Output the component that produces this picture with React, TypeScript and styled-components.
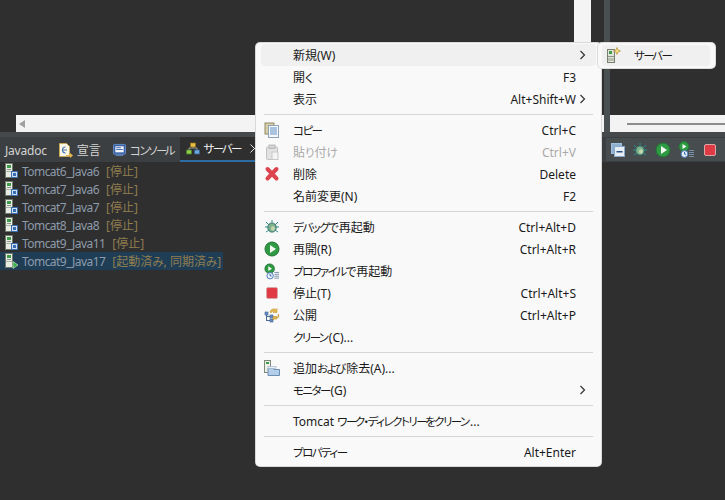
import React from "react";
import styled, { createGlobalStyle } from "styled-components";

const Global = createGlobalStyle`
  html, body { margin: 0; padding: 0; background: #2f2f2f; }
  body { font-family: "Noto Sans", "Noto Sans CJK JP", sans-serif; font-size: 12px; font-feature-settings: "palt"; }
`;

const Page = styled.div`
  position: relative; width: 725px; height: 500px; overflow: hidden; background: #2f2f2f;
  display: flex; flex-direction: column;
`;
const Top = styled.div`display: flex; height: 132px; flex: none;`;
const EditorPane = styled.div`width: 604px; display: flex; flex-direction: column; flex: none;`;
const EditorBody = styled.div`flex: 1; display: flex; justify-content: flex-end; padding-right: 13px;`;
const VScroll = styled.div`width: 17px; background: #f4f4f4;`;
const HScroll = styled.div<{ $inset?: number }>`
  height: 17px; background: #f3f3f3; margin-left: ${p => p.$inset ?? 0}px;
  display: flex; align-items: center;
`;
const ArrowLeft = styled.div`
  width: 0; height: 0; margin-left: 3px;
  border-top: 4px solid transparent; border-bottom: 4px solid transparent; border-right: 6px solid #a0a0a0;
`;
const Sash = styled.div`width: 6px; background: #4a4f52; flex: none;`;
const RightPane = styled.div`flex: 1; display: flex; flex-direction: column; justify-content: flex-end;`;
const Thumb = styled.div`flex: 1; height: 2px; margin-left: 17px; background: #8c8c8c;`;

const TabBand = styled.div`
  height: 30px; flex: none; box-sizing: border-box; display: flex; align-items: stretch;
  background: #3c3f42; border-top: 5px solid #45494c;
`;
const Tab = styled.div<{ $active?: boolean; $ml?: number; $tracking?: number }>`
  flex: none; display: flex; align-items: center; gap: 4px; height: 25px; box-sizing: border-box;
  margin-left: ${p => p.$ml ?? 0}px;
  padding: ${p => (p.$active ? "0 0 0 6px" : "1px 0 0")};
  color: ${p => (p.$active ? "#f2f2f2" : "#d4d4d4")};
  background: ${p => (p.$active ? "#2f2f2f" : "transparent")};
  border-bottom: ${p => (p.$active ? "2px solid #2e6da4" : "0")};
  width: ${p => (p.$active ? "76px" : "auto")};
  letter-spacing: ${p => p.$tracking ?? 0}px;
  white-space: nowrap;
  svg { flex: none; }
`;
const CloseIcon = styled.svg`margin-left: 5px;`;
const Toolbar = styled.div`
  margin-left: auto; width: 119px; box-sizing: border-box; height: 23px; margin-top: 1px;
  background: #474c4f; display: flex; align-items: center; padding-left: 5px; gap: 7px;
  svg { flex: none; }
`;

const List = styled.div`display: flex; flex-direction: column; align-items: flex-start;`;
const ServerRow = styled.div<{ $selected?: boolean }>`
  height: 18px; display: flex; align-items: center; gap: 3px; padding: 0 2px 0 5px; white-space: nowrap;
  background: ${p => (p.$selected ? "#1f3e56" : "transparent")};
  svg { flex: none; }
`;
const ServerName = styled.span`color: #8d9bab; letter-spacing: -0.55px;`;
const ServerState = styled.span`color: #8f7d4f; margin-left: 4px;`;

const KanaRun = styled.span`font-size: 11.5px; letter-spacing: -1.5px; margin-right: 1.5px;`;
const LongMark = styled.span`letter-spacing: -2.5px;`;
const Jp = ({ text }: { text: string }) => (
  <>
    {text.split(/([\u3040-\u30ff]+)/).map((part, i) =>
      i % 2 === 1 ? (
        <KanaRun key={i}>
          {part.split(/(ー+)/).map((piece, j) =>
            j % 2 === 1 ? <LongMark key={j}>{piece}</LongMark> : piece
          )}
        </KanaRun>
      ) : (
        part
      )
    )}
  </>
);

const Menu = styled.div`
  position: absolute; left: 256px; top: 43px; width: 345px; height: 423px; box-sizing: border-box;
  background: #f9f9f9; border-radius: 4px; padding: 1px 5px 3px;
  box-shadow: 0 0 0 1px #d8d8d8;
`;
const Row = styled.div<{ $hover?: boolean; $disabled?: boolean }>`
  position: relative; height: 22px; display: flex; align-items: center; padding: 0 20px 0 32px;
  border-radius: 4px; white-space: nowrap;
  background: ${p => (p.$hover ? "#f0f0f0" : "transparent")};
  color: ${p => (p.$disabled ? "#a9a9a9" : "#1a1a1a")};
`;
const IconSlot = styled.span`
  position: absolute; left: 3px; top: 3px; width: 16px; height: 16px; display: flex;
`;
const Shortcut = styled.span`margin-left: auto;`;
const Chevron = styled.svg`position: absolute; right: 9px; top: 6px;`;
const Sep = styled.div`height: 1px; margin: 4px 0 4px 3px; width: 329px; background: #d6d6d6;`;

const SubMenu = styled.div`
  position: absolute; left: 598px; top: 43px; width: 117px; height: 25px; box-sizing: border-box;
  background: #f9f9f9; border-radius: 4px; padding: 2px 5px 2px 4px; box-shadow: 0 0 0 1px #dcdcdc;
`;
const SubRow = styled.div`
  position: relative; height: 21px; border-radius: 4px; background: #f0f0f0; color: #1a1a1a;
  display: flex; align-items: center; padding-left: 32px;
`;
const SubIcon = styled.span`position: absolute; left: 4px; top: 2px; width: 16px; height: 16px; display: flex;`;

const Server = ({ badge }: { badge: "stop" | "run" }) => (
  <svg width="14" height="16" viewBox="0 0 14 16">
    <rect x="0.5" y="0.5" width="7" height="14" fill="#e8ece4" stroke="#6f7a6c" />
    <rect x="2" y="2" width="4" height="3" fill="#3f9a4a" />
    <rect x="2" y="6" width="4" height="1" fill="#8a9488" />
    <rect x="1" y="8" width="6" height="1" fill="#a9b2a6" />
    {badge === "stop" ? (
      <>
        <rect x="6.5" y="8.5" width="6" height="6" fill="#cfe0f5" stroke="#3a6db0" />
        <rect x="8" y="10" width="3" height="3" fill="#3a6db0" />
      </>
    ) : (
      <path d="M8 8.5 L13 12 L8 15.5Z" fill="#38b04a" stroke="#d8f0d8" strokeWidth=".6" />
    )}
  </svg>
);
const Copy = () => (
  <svg width="16" height="16" viewBox="0 0 16 16">
    <rect x="1" y="1" width="9" height="11" fill="#d8cfa8" stroke="#8f8a66" />
    <rect x="4.5" y="3.5" width="10" height="12" fill="#f6f8fb" stroke="#8fa2b6" />
    <path d="M6 6h7M6 8h7M6 10h7M6 12h7" stroke="#5f8fc5" />
  </svg>
);
const Paste = () => (
  <svg width="16" height="16" viewBox="0 0 16 16">
    <rect x="2.5" y="3" width="11" height="12.5" rx="1" fill="#e2e2e2" stroke="#c2c2c2" />
    <rect x="5" y="1" width="6" height="3.5" fill="#d2d2d2" stroke="#bcbcbc" />
    <rect x="8" y="8" width="6" height="7.5" fill="#f4f4f4" stroke="#c8c8c8" />
  </svg>
);
const Delete = () => (
  <svg width="16" height="16" viewBox="0 0 16 16">
    <path d="M3.5 3L12.5 12.5M12.5 3L3.5 12.500" stroke="#dc444e" strokeWidth="4" strokeLinecap="round" />
  </svg>
);
const Bug = () => (
  <svg width="16" height="16" viewBox="0 0 16 16">
    <path d="M2 3l3 3M14 3l-3 3M1 8h3M15 8h-3M2 13l3-2M14 13l-3-2M8 1v2" stroke="#2f8f8f" strokeWidth="1" />
    <ellipse cx="8" cy="8.5" rx="4.2" ry="4.6" fill="#7fb28a" stroke="#2c6f6a" />
    <ellipse cx="9" cy="9.5" rx="2" ry="2.2" fill="#c4d6b0" />
  </svg>
);
const Play = () => (
  <svg width="16" height="16" viewBox="0 0 16 16">
    <circle cx="8" cy="8" r="7" fill="#2f9a44" stroke="#217334" />
    <path d="M6 4l6 4-6 4z" fill="#f4faf2" />
  </svg>
);
const Profile = () => (
  <svg width="17" height="17" viewBox="0 0 17 17">
    <circle cx="6" cy="5.5" r="5" fill="#2f9a44" stroke="#217334" />
    <path d="M4.5 3l4 2.5-4 2.5z" fill="#f4faf2" />
    <circle cx="6.5" cy="13" r="3.4" fill="#e8f0fa" stroke="#4a78b8" />
    <path d="M6.5 11v2.2h1.6" stroke="#3a68a8" fill="none" />
    <path d="M11 9.5h5M11 11.5h5M11 13.5h5M11 15.5h5" stroke="#7a8ea8" />
  </svg>
);
const Stop = () => (
  <svg width="16" height="16" viewBox="0 0 16 16">
    <rect x="2.5" y="2.5" width="11" height="11" rx="1.5" fill="#e03a44" stroke="#d8a8a8" />
  </svg>
);
const Publish = () => (
  <svg width="16" height="16" viewBox="0 0 16 16">
    <path d="M2.5 7v7M2.5 9.5h5M2.5 13.5h5" stroke="#4a6a9a" fill="none" />
    <rect x="1" y="5" width="3" height="3" fill="#6a90c4" stroke="#3f5f8f" strokeWidth=".6" />
    <rect x="6" y="8" width="3" height="3" fill="#6a90c4" stroke="#3f5f8f" strokeWidth=".6" />
    <rect x="6" y="12" width="3" height="3" fill="#6a90c4" stroke="#3f5f8f" strokeWidth=".6" />
    <path d="M6 5a4 4 0 0 1 6-2.5l1-1v4h-4l1.3-1.2A2.6 2.6 0 0 0 7 6z" fill="#e8b84a" stroke="#b08a2a" strokeWidth=".5" />
    <path d="M15 8a4 4 0 0 1-5 4l-1 1V9.500h4l-1.200 1.200A2.600 2.600 0 0 0 14 7z" fill="#e8b84a" stroke="#b08a2a" strokeWidth=".5" />
  </svg>
);
const AddRemove = () => (
  <svg width="16" height="16" viewBox="0 0 16 16">
    <rect x="0.5" y="0.5" width="6" height="12" fill="#eef0ea" stroke="#7d8a7a" />
    <rect x="2" y="2" width="3" height="2" fill="#3f9a4a" />
    <path d="M4 8h5l1 1.500h5.500v6H4z" fill="#b4cde8" stroke="#6a8fb5" />
    <rect x="4" y="6.500" width="8" height="2" fill="#e8eef5" stroke="#8fa5bd" strokeWidth=".5" />
  </svg>
);
const NewServer = () => (
  <svg width="16" height="16" viewBox="0 0 16 16">
    <rect x="1.500" y="2.500" width="7" height="13" fill="#dfe3da" stroke="#77806f" />
    <rect x="3" y="4" width="3" height="3" fill="#3f9a4a" />
    <rect x="2" y="9" width="6" height="1" fill="#8a9488" />
    <rect x="2" y="11" width="6" height="3" fill="#b8c0b2" />
    <path d="M11 0.500l1 2.500 2.500 1-2.500 1-1 2.500-1-2.500-2.500-1 2.500-1z" fill="#f6e27a" stroke="#b8923a" strokeWidth=".7" />
  </svg>
);
const Collapse = () => (
  <svg width="14" height="14" viewBox="0 0 14 14">
    <rect x="0.500" y="0.500" width="10" height="10" fill="#8fb0d0" stroke="#9fc0e0" />
    <rect x="3.500" y="3.500" width="10" height="10" fill="#e6eef6" stroke="#8aa8c8" />
    <rect x="5.500" y="8" width="6" height="1.500" fill="#2f4f7f" />
  </svg>
);
const Decl = () => (
  <svg width="15" height="15" viewBox="0 0 15 15">
    <path d="M1.500.5h7l3 3v10h-10z" fill="#faf6e4" stroke="#c8a85a" />
    <path d="M7.500 4a3 3 0 1 0 0 6" stroke="#4a78b8" fill="none" strokeWidth="1.200" />
    <path d="M5 7h4" stroke="#4a78b8" />
    <path d="M8 12h4v-2l3 2.500-3 2.500v-2H8z" fill="#e8b84a" />
  </svg>
);
const Console = () => (
  <svg width="13" height="14" viewBox="0 0 14 14">
    <rect x="0.500" y="1" width="13" height="10.500" rx="1" fill="#3560a8" stroke="#6a90c8" />
    <rect x="2.500" y="3" width="9" height="6.500" fill="#f4f6fa" />
    <path d="M3.500 4.500h5M3.500 6.500h7" stroke="#3560a8" />
    <rect x="3" y="12" width="8" height="1.500" fill="#5f80b0" />
  </svg>
);
const Servers = () => (
  <svg width="14" height="14" viewBox="0 0 14 14">
    <path d="M7 2v4M3 6h8v2M3 6v3" stroke="#a0a0a0" fill="none" />
    <rect x="0.500" y="8" width="5" height="4" fill="#8fcf4a" stroke="#4a7a2a" strokeWidth=".7" />
    <rect x="4.500" y="1" width="5" height="4" fill="#e8c040" stroke="#8f7020" strokeWidth=".7" />
    <rect x="8.500" y="8" width="5" height="4" fill="#6fa8dc" stroke="#2f5f8f" strokeWidth=".7" />
  </svg>
);
const Caret = () => (
  <Chevron width="8" height="10" viewBox="0 0 8 10">
    <path d="M1.500 1l4 4-4 4" fill="none" stroke="#333" strokeWidth="1.200" />
  </Chevron>
);

const servers = [
  ["Tomcat6_Java6", "[停止]"],
  ["Tomcat7_Java6", "[停止]"],
  ["Tomcat7_Java7", "[停止]"],
  ["Tomcat8_Java8", "[停止]"],
  ["Tomcat9_Java11", "[停止]"],
  ["Tomcat9_Java17", "[起動済み, 同期済み]"],
];

type Item = { label: string; key?: string; icon?: React.ReactNode; sub?: boolean; hover?: boolean; disabled?: boolean } | "sep";
const items: Item[] = [
  { label: "新規(W)", sub: true, hover: true },
  { label: "開く", key: "F3" },
  { label: "表示", key: "Alt+Shift+W", sub: true },
  "sep",
  { label: "コピー", key: "Ctrl+C", icon: <Copy /> },
  { label: "貼り付け", key: "Ctrl+V", icon: <Paste />, disabled: true },
  { label: "削除", key: "Delete", icon: <Delete /> },
  { label: "名前変更(N)", key: "F2" },
  "sep",
  { label: "デバッグで再起動", key: "Ctrl+Alt+D", icon: <Bug /> },
  { label: "再開(R)", key: "Ctrl+Alt+R", icon: <Play /> },
  { label: "プロファイルで再起動", icon: <Profile /> },
  { label: "停止(T)", key: "Ctrl+Alt+S", icon: <Stop /> },
  { label: "公開", key: "Ctrl+Alt+P", icon: <Publish /> },
  { label: "クリーン(C)..." },
  "sep",
  { label: "追加および除去(A)...", icon: <AddRemove /> },
  { label: "モニター(G)", sub: true },
  "sep",
  { label: "Tomcat ワーク・ディレクトリーをクリーン..." },
  "sep",
  { label: "プロパティー", key: "Alt+Enter" },
];

export default function App() {
  return (
    <Page>
      <Global />
      <Top>
        <EditorPane>
          <EditorBody><VScroll /></EditorBody>
          <HScroll $inset={16}><ArrowLeft /></HScroll>
        </EditorPane>
        <Sash />
        <RightPane>
          <HScroll><Thumb /></HScroll>
        </RightPane>
      </Top>
      <TabBand>
        <Tab $ml={5} $tracking={-0.2}>Javadoc</Tab>
        <Tab $ml={11}><Decl />宣言</Tab>
        <Tab $ml={12}><Console /><span><Jp text="コンソール" /></span></Tab>
        <Tab $ml={4} $active>
          <Servers />
          <span><Jp text="サーバー" /></span>
          <CloseIcon width="9" height="9" viewBox="0 0 9 9">
            <path d="M.5.5l8 8M8.500.5l-8 8" stroke="#e8e8e8" fill="none" />
          </CloseIcon>
        </Tab>
        <Toolbar>
          <Collapse /><Bug /><Play /><Profile /><Stop />
        </Toolbar>
      </TabBand>
      <List>
        {servers.map(([n, s], i) => (
          <ServerRow key={n} $selected={i === 5}>
            <Server badge={i === 5 ? "run" : "stop"} />
            <ServerName>{n}</ServerName>
            <ServerState><Jp text={s} /></ServerState>
          </ServerRow>
        ))}
      </List>
      <Menu>
        {items.map((it, i) =>
          it === "sep" ? (
            <Sep key={i} />
          ) : (
            <Row key={i} $hover={it.hover} $disabled={it.disabled}>
              {it.icon && <IconSlot>{it.icon}</IconSlot>}
              <span><Jp text={it.label} /></span>
              {it.key && <Shortcut>{it.key}</Shortcut>}
              {it.sub && <Caret />}
            </Row>
          )
        )}
      </Menu>
      <SubMenu>
        <SubRow><SubIcon><NewServer /></SubIcon><span><Jp text="サーバー" /></span></SubRow>
      </SubMenu>
    </Page>
  );
}
